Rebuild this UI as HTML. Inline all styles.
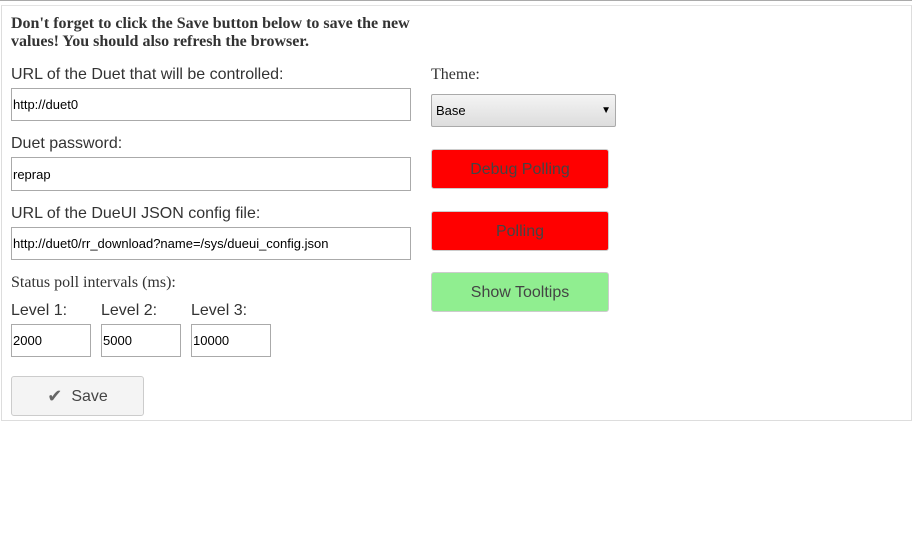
<!DOCTYPE html>
<html><head><style>
body{margin:0;width:912px;height:534px;background:#fff;position:relative;font-family:"Liberation Sans",sans-serif;color:#333;overflow:hidden}
.a{position:absolute}
.top{left:0;top:0;width:912px;height:1px;background:#aaa}
.box{left:1px;top:5px;width:909px;height:414px;border:1px solid #ddd;border-top:1px solid #e3e3e3}
.h{left:11px;top:15px;font:bold 16px/18px "Liberation Serif",serif;color:#333}
.l{font-size:16px;line-height:18px}
.s{font:16px/18px "Liberation Serif",serif}
.in{border:1px solid #aaa;box-sizing:border-box;font-size:13px;color:#000;padding-left:1px;display:flex;align-items:center;background:#fff}
.btn{box-sizing:border-box;border:1px solid #ccc;border-radius:3px;display:flex;align-items:center;justify-content:center;font-size:16px;color:#444}
</style></head><body>
<div class="a top"></div>
<div class="a box"></div>
<div class="a h">Don't forget to click the Save button below to save the new<br>values! You should also refresh the browser.</div>
<div class="a l" style="left:11px;top:66px">URL of the Duet that will be controlled:</div>
<div class="a in" style="left:11px;top:88px;width:400px;height:33px">http://duet0</div>
<div class="a l" style="left:11px;top:135px">Duet password:</div>
<div class="a in" style="left:11px;top:157px;width:400px;height:34px">reprap</div>
<div class="a l" style="left:11px;top:205px">URL of the DueUI JSON config file:</div>
<div class="a in" style="left:11px;top:227px;width:400px;height:33px">http://duet0/rr_download?name=/sys/dueui_config.json</div>
<div class="a s" style="left:11px;top:274px">Status poll intervals (ms):</div>
<div class="a l" style="left:11px;top:302px">Level 1:</div>
<div class="a l" style="left:101px;top:302px">Level 2:</div>
<div class="a l" style="left:191px;top:302px">Level 3:</div>
<div class="a in" style="left:11px;top:324px;width:80px;height:33px">2000</div>
<div class="a in" style="left:101px;top:324px;width:80px;height:33px">5000</div>
<div class="a in" style="left:191px;top:324px;width:80px;height:33px">10000</div>
<div class="a btn" style="left:11px;top:376px;width:133px;height:40px;background:#f4f4f4;padding-top:1px"><span style="color:#666;margin-right:9px;font-size:18px">✔</span>Save</div>
<div class="a s" style="left:431px;top:66px">Theme:</div>
<div class="a" style="left:431px;top:94px;width:185px;height:33px;box-sizing:border-box;border:1px solid #aaa;border-radius:2px;background:linear-gradient(#f4f4f4,#ddd);font-size:13px;color:#000;display:flex;align-items:center;padding-left:4px">Base<span style="position:absolute;right:4px;font-size:10px">▼</span></div>
<div class="a btn" style="left:431px;top:149px;width:178px;height:40px;background:#f00;padding-top:1px">Debug Polling</div>
<div class="a btn" style="left:431px;top:211px;width:178px;height:40px;background:#f00;padding-top:1px">Polling</div>
<div class="a btn" style="left:431px;top:272px;width:178px;height:40px;background:#90ee90;padding-top:1px">Show Tooltips</div>
</body></html>
